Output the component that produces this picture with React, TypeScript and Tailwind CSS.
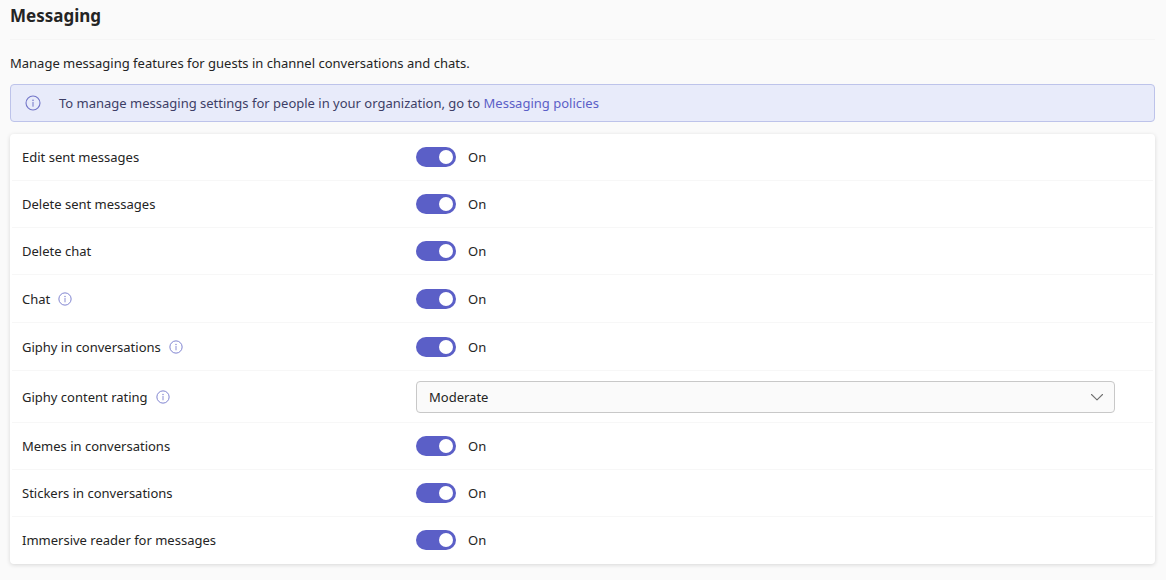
import React, { useState } from 'react'

interface Setting {
  id: string
  label: string
  info?: string
  options?: string[]
}

const SETTINGS: Setting[] = [
  { id: 'edit-sent', label: 'Edit sent messages' },
  { id: 'delete-sent', label: 'Delete sent messages' },
  { id: 'delete-chat', label: 'Delete chat' },
  { id: 'chat', label: 'Chat', info: 'About chat' },
  { id: 'giphy', label: 'Giphy in conversations', info: 'About Giphy in conversations' },
  {
    id: 'giphy-rating',
    label: 'Giphy content rating',
    info: 'About Giphy content rating',
    options: ['Moderate', 'Strict', 'No restriction'],
  },
  { id: 'memes', label: 'Memes in conversations' },
  { id: 'stickers', label: 'Stickers in conversations' },
  { id: 'immersive-reader', label: 'Immersive reader for messages' },
]

function InfoIcon({ className }: { className: string }) {
  return (
    <svg className={className} viewBox="0 0 16 16" fill="none" aria-hidden="true">
      <circle cx="8" cy="8" r="7" stroke="currentColor" strokeWidth="1.1" />
      <circle cx="8" cy="5.2" r="0.8" fill="currentColor" />
      <path d="M8 7.3v4" stroke="currentColor" strokeLinecap="round" />
    </svg>
  )
}

function Toggle({ id }: { id: string }) {
  const [on, setOn] = useState(true)

  return (
    <div className="flex items-center gap-3">
      <input
        id={id}
        type="checkbox"
        role="switch"
        checked={on}
        onChange={e => setOn(e.target.checked)}
        className="flex h-5 w-10 shrink-0 cursor-pointer appearance-none items-center rounded-full bg-gray-400 px-[3px] transition before:size-3.5 before:rounded-full before:bg-white checked:justify-end checked:bg-[#5b5fc7]"
      />
      <span>{on ? 'On' : 'Off'}</span>
    </div>
  )
}

function Dropdown({ id, options }: { id: string; options: string[] }) {
  const [value, setValue] = useState(options[0])

  return (
    <div className="relative mr-[38px] flex-1">
      <select
        id={id}
        value={value}
        onChange={e => setValue(e.target.value)}
        className="block h-8 w-full appearance-none rounded border border-[#c8c8c8] bg-[#fafafa] px-3"
      >
        {options.map(option => (
          <option key={option}>{option}</option>
        ))}
      </select>
      <svg
        className="pointer-events-none absolute top-3 right-[11px] h-2 w-3.5 text-[#707070]"
        viewBox="0 0 14 8"
        fill="none"
        aria-hidden="true"
      >
        <path d="M1.5 1.5 7 6.8l5.5-5.3" stroke="currentColor" strokeWidth="1.1" strokeLinecap="round" strokeLinejoin="round" />
      </svg>
    </div>
  )
}

function SettingRow({ setting }: { setting: Setting }) {
  const { id, label, info, options } = setting
  const height = options ? 'min-h-[52px]' : info ? 'min-h-[48px]' : 'min-h-[47px]'

  return (
    <div className={`mx-0.5 flex items-center border-b border-[#f7f7f7] pl-2.5 last:border-transparent ${height}`}>
      <div className="flex w-[394px] shrink-0 items-center gap-2">
        <label htmlFor={id}>{label}</label>
        {info && (
          <button type="button" aria-label={info} className="text-[#7b7fce]">
            <InfoIcon className="size-3.5" />
          </button>
        )}
      </div>
      {options ? <Dropdown id={id} options={options} /> : <Toggle id={id} />}
    </div>
  )
}

export default function App() {
  return (
    <main className="min-h-screen bg-[#fafafa] pr-[11px] pb-4 pl-2.5 font-['Noto_Sans','Open_Sans',sans-serif] text-[13px] leading-5 text-[#242424]">
      <h2 className="border-b border-[#f5f5f5] pt-1 pb-[11px] text-[17px] leading-6 font-bold">Messaging</h2>
      <p className="mt-[13px] mb-[11px]">Manage messaging features for guests in channel conversations and chats.</p>

      <div className="flex min-h-[38px] items-center gap-[18px] rounded border border-[#bdc3ea] bg-[#e8ebfa] pl-3.5 text-[#3d3e66]">
        <InfoIcon className="size-4 shrink-0 text-[#7275c8]" />
        <p>
          To manage messaging settings for people in your organization, go to{' '}
          <a href="#" className="text-[#5b5fc7]">Messaging policies</a>
        </p>
      </div>

      <div className="mt-3 rounded bg-white shadow-[0_1px_4px_rgba(0,0,0,0.14)]">
        {SETTINGS.map(setting => (
          <SettingRow key={setting.id} setting={setting} />
        ))}
      </div>
    </main>
  )
}
